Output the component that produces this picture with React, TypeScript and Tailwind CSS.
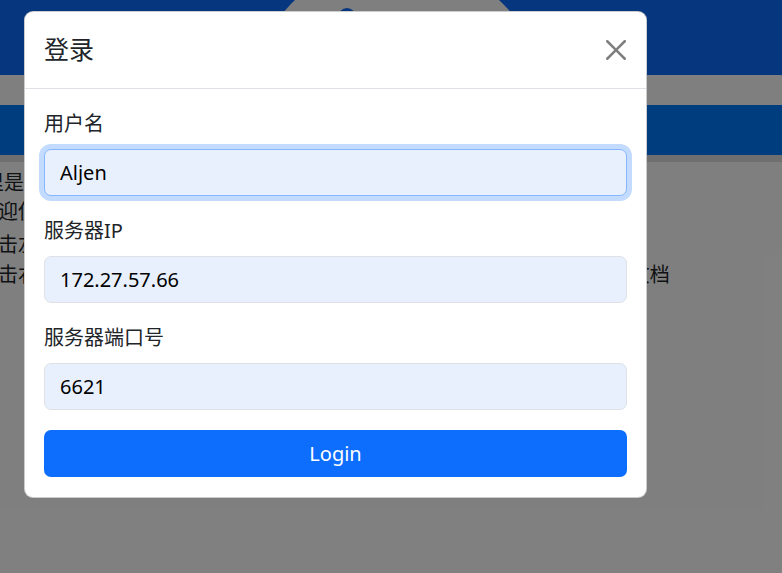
import React from "react";

const font = "font-['Noto_Sans','Noto_Sans_CJK_SC',sans-serif]";

function Field({ label, value, focused }: { label: string; value: string; focused?: boolean }) {
  return (
    <div className="mb-[20px]">
      <div className="text-[20px] leading-[30px] text-[#212529] mb-[10px]">{label}</div>
      <input
        readOnly
        defaultValue={value}
        className={
          focused
            ? "block w-full h-[47px] px-[15px] rounded-[7px] bg-[#e8f0fe] text-black text-[20px] border border-[#86b7fe] shadow-[0_0_0_5px_rgba(13,110,253,0.25)] outline-none"
            : "block w-full h-[47px] px-[15px] rounded-[7px] bg-[#e8f0fe] text-black text-[20px] border border-[#dee2e6] outline-none"
        }
      />
    </div>
  );
}

export default function App() {
  return (
    <div className={`relative w-[782px] h-[573px] overflow-hidden bg-white ${font}`}>
      {/* page behind */}
      <div className="relative h-[75px] bg-[#0d6efd]">
        <div className="absolute left-[247px] top-[-40px] w-[300px] h-[300px] rounded-full bg-white" />
        <div className="absolute left-[338px] top-[8px] w-[18px] h-[18px] rounded-full bg-[#0d6efd]" />
      </div>
      <div className="h-[30px] bg-white" />
      <div className="h-[50px] bg-[#007bff]" />
      <div className="h-[7px] bg-[#dedede]" />
      <div className="pt-[6px] ml-[-22px] text-[20px] leading-[30px] text-[#212529] whitespace-nowrap">
        <p className="ml-[-14px]">这里是服务器管理系统的首页</p>
        <p className="-mt-[1px]">欢迎使用本系统进行服务器连接</p>
        <p className="mt-[3px]">点击左侧菜单可以切换不同的功能页面</p>
        <p>点击右侧导航栏中的帮助按钮，可以随时查看系统的详细使用说明与 APIs 文档</p>
      </div>

      {/* backdrop */}
      <div className="absolute inset-0 bg-black/50" />

      {/* modal */}
      <div className="absolute left-[24px] top-[11px] w-[623px] rounded-[9px] bg-white border border-black/20">
        <div className="flex items-center justify-between px-[19px] pt-[19px] pb-[20px] border-b border-[#dee2e6]">
          <h5 className="text-[25px] leading-[37px] font-normal text-[#212529]">登录</h5>
          <button className="w-[20px] h-[20px] mr-[1px] opacity-50">
            <svg viewBox="0 0 16 16" width="20" height="20" fill="#000">
              <path d="M.293.293a1 1 0 0 1 1.414 0L8 6.586 14.293.293a1 1 0 1 1 1.414 1.414L9.414 8l6.293 6.293a1 1 0 0 1-1.414 1.414L8 9.414l-6.293 6.293a1 1 0 0 1-1.414-1.414L6.586 8 .293 1.707a1 1 0 0 1 0-1.414" />
            </svg>
          </button>
        </div>
        <div className="px-[19px] pt-[20px] pb-[20px]">
          <Field label="用户名" value="Aljen" focused />
          <Field label="服务器IP" value="172.27.57.66" />
          <Field label="服务器端口号" value="6621" />
          <button className="block w-full h-[47px] rounded-[7px] bg-[#0d6efd] text-white text-[20px] leading-[30px]">
            Login
          </button>
        </div>
      </div>
    </div>
  );
}
